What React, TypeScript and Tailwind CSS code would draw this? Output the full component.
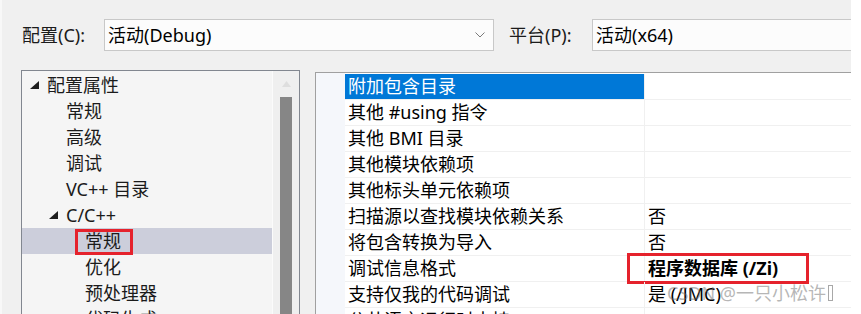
import React from "react";

type TreeItem = { label: string; level: number; expanded?: boolean; selected?: boolean };

const treeItems: TreeItem[] = [
  { label: "配置属性", level: 0, expanded: true },
  { label: "常规", level: 1 },
  { label: "高级", level: 1 },
  { label: "调试", level: 1 },
  { label: "VC++ 目录", level: 1 },
  { label: "C/C++", level: 1, expanded: true },
  { label: "常规", level: 2, selected: true },
  { label: "优化", level: 2 },
  { label: "预处理器", level: 2 },
  { label: "代码生成", level: 2 },
  { label: "语言", level: 2 },
];

type GridRow = { name: string; value?: string; selected?: boolean; bold?: boolean };

const gridRows: GridRow[] = [
  { name: "附加包含目录", selected: true },
  { name: "其他 #using 指令" },
  { name: "其他 BMI 目录" },
  { name: "其他模块依赖项" },
  { name: "其他标头单元依赖项" },
  { name: "扫描源以查找模块依赖关系", value: "否" },
  { name: "将包含转换为导入", value: "否" },
  { name: "调试信息格式", value: "程序数据库 (/Zi)", bold: true },
  { name: "支持仅我的代码调试", value: "是 (/JMC)" },
  { name: "公共语言运行时支持", value: "" },
];

function Triangle() {
  return (
    <svg width="9" height="8" viewBox="0 0 9 8" className="block">
      <polygon points="9,0 9,8 0,8" fill="#1e1e1e" />
    </svg>
  );
}

export default function App() {
  return (
    <div className="relative flex h-[314px] w-[861px] overflow-hidden bg-white font-['Noto_Sans','Noto_Sans_CJK_SC',sans-serif] text-[18px] text-black">
      <div className="flex w-[851px] flex-col border-l-2 border-[#f8f8f8] bg-[#f0f0f0]">
        {/* Top bar */}
        <div className="mt-[19px] flex h-[32px] items-center pl-[20px]">
          <span className="w-[82px] text-[#1b1b1b]">配置(C):</span>
          <div className="flex h-full w-[390px] items-center justify-between border border-[#c8c8c8] bg-[#fcfcfc] pl-[3px] pr-[8px]">
            <span>活动(Debug)</span>
            <svg width="10" height="6" viewBox="0 0 10 6" className="block">
              <polyline points="0.5,0.5 5,5 9.5,0.5" fill="none" stroke="#7a7a7a" strokeWidth="1" />
            </svg>
          </div>
          <span className="ml-[15px] w-[83px] text-[#1b1b1b]">平台(P):</span>
          <div className="flex h-full flex-1 items-center border border-r-0 border-[#c8c8c8] bg-[#fcfcfc] pl-[3px]">
            活动(x64)
          </div>
        </div>

        {/* Panels */}
        <div className="mt-[19px] flex min-h-0 flex-1">
          {/* Tree panel */}
          <div className="ml-[19px] flex w-[279px] border border-b-0 border-[#828790]">
            <div className="w-[250px] bg-[#f5f5f5] pt-[1px]">
              {treeItems.map((it, i) => (
                <div
                  key={i}
                  className={`relative flex h-[26px] items-center text-[#1b1b1b] ${it.selected ? "bg-[#cccedb]" : ""}`}
                  style={{ paddingLeft: 8 + it.level * 19 }}
                >
                  <span className="flex w-[17px] items-center">{it.expanded ? <Triangle /> : null}</span>
                  <span className="whitespace-nowrap">{it.label}</span>
                  {it.selected && (
                    <div className="absolute left-[53px] top-[1px] h-[26px] w-[58px] border-[3px] border-[#e5222c]" />
                  )}
                </div>
              ))}
            </div>
            <div className="w-[1px] bg-[#fbfbfb]" />
            <div className="flex w-[26px] flex-col items-center bg-[#efefef]">
              <div className="flex h-[26px] items-center justify-center">
                <svg width="9" height="6" viewBox="0 0 9 6" className="block">
                  <polygon points="4.5,0 9,6 0,6" fill="#dedede" />
                </svg>
              </div>
              <div className="w-[12px] flex-1 bg-[#868686]" />
            </div>
          </div>

          {/* Property grid */}
          <div className="ml-[15px] mt-[2px] flex flex-1 border-l border-t border-[#a0a0a0] bg-white">
            <div className="w-[29px] bg-[#f5f7fb]" />
            <div className="flex-1 pt-[1px]">
              {gridRows.map((r, i) => (
                <div key={i} className="relative flex h-[26px] border-b border-[#f0f0f0]">
                  <div
                    className={`flex w-[300px] items-center whitespace-nowrap border-r border-[#f0f0f0] pl-[3px] ${
                      r.selected ? "bg-[#0078d7] text-white" : "text-black"
                    }`}
                  >
                    {r.name}
                  </div>
                  <div className={`flex flex-1 items-center whitespace-nowrap pl-[3px] ${r.bold ? "font-bold" : ""}`}>
                    {r.value}
                  </div>
                  {r.bold && (
                    <div className="absolute left-[282px] top-[-3px] h-[31px] w-[182px] border-[3px] border-[#e5222c]" />
                  )}
                </div>
              ))}
            </div>
          </div>
        </div>
      </div>

      {/* Watermark */}
      <div className="pointer-events-none absolute left-[667px] top-[280px] flex h-[26px] items-center whitespace-nowrap text-[18px] text-[rgba(110,110,110,0.5)]">
        CSDN @一只小松许
        <span className="ml-[2px] inline-block h-[16px] w-[5px] border border-[rgba(110,110,110,0.6)]" />
      </div>
    </div>
  );
}
